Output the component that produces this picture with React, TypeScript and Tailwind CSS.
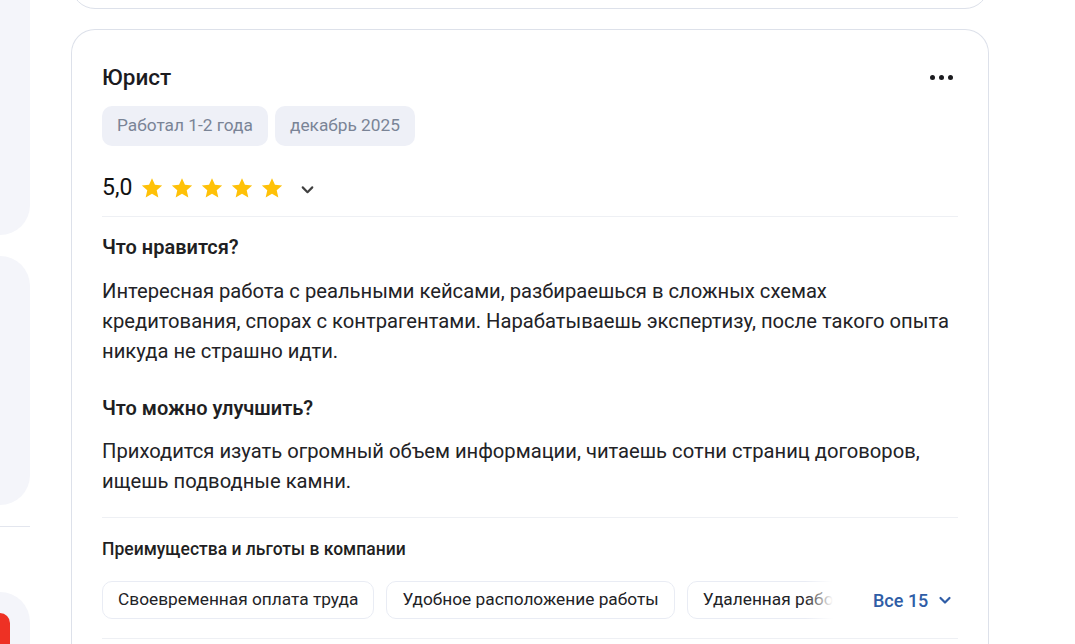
import React from "react";

const Star = () => (
  <svg width="24" height="24" viewBox="0 0 24 24" className="shrink-0">
    <path
      d="M12 2.2l2.95 6.62 7.2.7-5.43 4.8 1.6 7.08L12 17.72 5.68 21.4l1.6-7.08L1.85 9.52l7.2-.7z"
      fill="#FFC107"
    />
  </svg>
);

const Chevron = ({ color, size = 16, w = 2 }: { color: string; size?: number; w?: number }) => (
  <svg width={size} height={size} viewBox="0 0 16 16" fill="none">
    <path d="M3.5 6l4.5 4.5L12.5 6" stroke={color} strokeWidth={w} strokeLinecap="round" strokeLinejoin="round" />
  </svg>
);

export default function App() {
  return (
    <div className="flex h-[644px] w-[1075px] overflow-hidden bg-white font-['Roboto',sans-serif] text-[#1f1f23]">
      {/* left sidebar remnants */}
      <div className="flex w-[30px] shrink-0 flex-col">
        <div className="h-[235px] shrink-0 rounded-br-[30px] bg-[#f4f5fa]" />
        <div className="mt-[21px] h-[249px] shrink-0 rounded-r-[30px] bg-[#f4f5fa]" />
        <div className="mt-[21px] h-px shrink-0 bg-[#e3e6ee]" />
        <div className="mt-[65px] flex-1 rounded-tr-[30px] bg-[#f4f5fa] pt-[21px]">
          <div className="h-full w-[10px] rounded-tr-[10px] bg-[#ee3124]" />
        </div>
      </div>

      {/* main column */}
      <div className="ml-[41px] flex w-[918px] shrink-0 flex-col">
        <div className="mt-[-40px] h-[49px] shrink-0 rounded-[24px] border border-[#dde1ea] bg-white" />

        <div className="mt-[20px] flex-1 rounded-t-[24px] border border-b-0 border-[#dde1ea] bg-white px-[30px] pt-[33px]">
          <div className="flex items-center justify-between">
            <h2 className="text-[22.5px] font-medium leading-[28px] text-[#1b1b1f]">Юрист</h2>
            <div className="mr-[5px] flex items-center gap-[4px]">
              <span className="h-[5px] w-[5px] rounded-full bg-[#1b1b1f]" />
              <span className="h-[5px] w-[5px] rounded-full bg-[#1b1b1f]" />
              <span className="h-[5px] w-[5px] rounded-full bg-[#1b1b1f]" />
            </div>
          </div>

          <div className="mt-[15px] flex gap-[7px]">
            <span className="flex h-[40px] items-center rounded-[10px] bg-[#eef0f7] px-[15px] text-[17.3px] text-[#7a8496]">
              Работал 1-2 года
            </span>
            <span className="flex h-[40px] items-center rounded-[10px] bg-[#eef0f7] px-[15px] text-[17.3px] text-[#7a8496]">
              декабрь 2025
            </span>
          </div>

          <div className="mt-[28px] flex h-[28px] items-center">
            <span className="text-[23px] leading-[28px] text-[#111]">5,0</span>
            <div className="ml-[8px] flex items-center gap-[6px]">
              <Star />
              <Star />
              <Star />
              <Star />
              <Star />
            </div>
            <span className="ml-[15px] mt-[2px]">
              <Chevron color="#404040" size={17} w={2} />
            </span>
          </div>

          <div className="mt-[14px] h-px bg-[#eef0f4]" />

          <h3 className="mt-[18px] text-[20px] font-semibold leading-[24px] text-[#1f1f23]">Что нравится?</h3>
          <p className="mt-[17px] text-[20.2px] leading-[30px] text-[#222226]">
            Интересная работа с реальными кейсами, разбираешься в сложных схемах
            <br />
            кредитования, спорах с контрагентами. Нарабатываешь экспертизу, после такого опыта
            <br />
            никуда не страшно идти.
          </p>

          <h3 className="mt-[30px] text-[20px] font-semibold leading-[24px] text-[#1f1f23]">Что можно улучшить?</h3>
          <p className="mt-[16px] text-[20.2px] leading-[30px] text-[#222226]">
            Приходится изуать огромный объем информации, читаешь сотни страниц договоров,
            <br />
            ищешь подводные камни.
          </p>

          <div className="mt-[21px] h-px bg-[#eef0f4]" />

          <h4 className="mt-[21px] text-[17.5px] font-medium leading-[20px] text-[#1f1f23]">
            Преимущества и льготы в компании
          </h4>

          <div className="mt-[22px] flex items-center">
            <div className="relative flex w-[731px] shrink-0 gap-[12px] overflow-hidden">
              <span className="flex h-[38px] shrink-0 items-center rounded-[10px] border border-[#e9ecf4] px-[15px] text-[17.3px] text-[#222226]">
                Своевременная оплата труда
              </span>
              <span className="flex h-[38px] shrink-0 items-center rounded-[10px] border border-[#e9ecf4] px-[15px] text-[17.3px] text-[#222226]">
                Удобное расположение работы
              </span>
              <span className="flex h-[38px] shrink-0 items-center rounded-[10px] border border-[#e9ecf4] px-[15px] text-[17.3px] text-[#222226]">
                Удаленная работа
              </span>
              <div className="pointer-events-none absolute inset-y-0 right-0 w-[28px] bg-gradient-to-r from-transparent to-white" />
            </div>
            <button className="ml-[40px] flex items-center gap-[9px] text-[18px] font-medium text-[#2f5da6]">
              Все 15
              <Chevron color="#2f5da6" size={16} w={2.2} />
            </button>
          </div>

          <div className="mt-[19px] h-px bg-[#eef0f4]" />
        </div>
      </div>
    </div>
  );
}
